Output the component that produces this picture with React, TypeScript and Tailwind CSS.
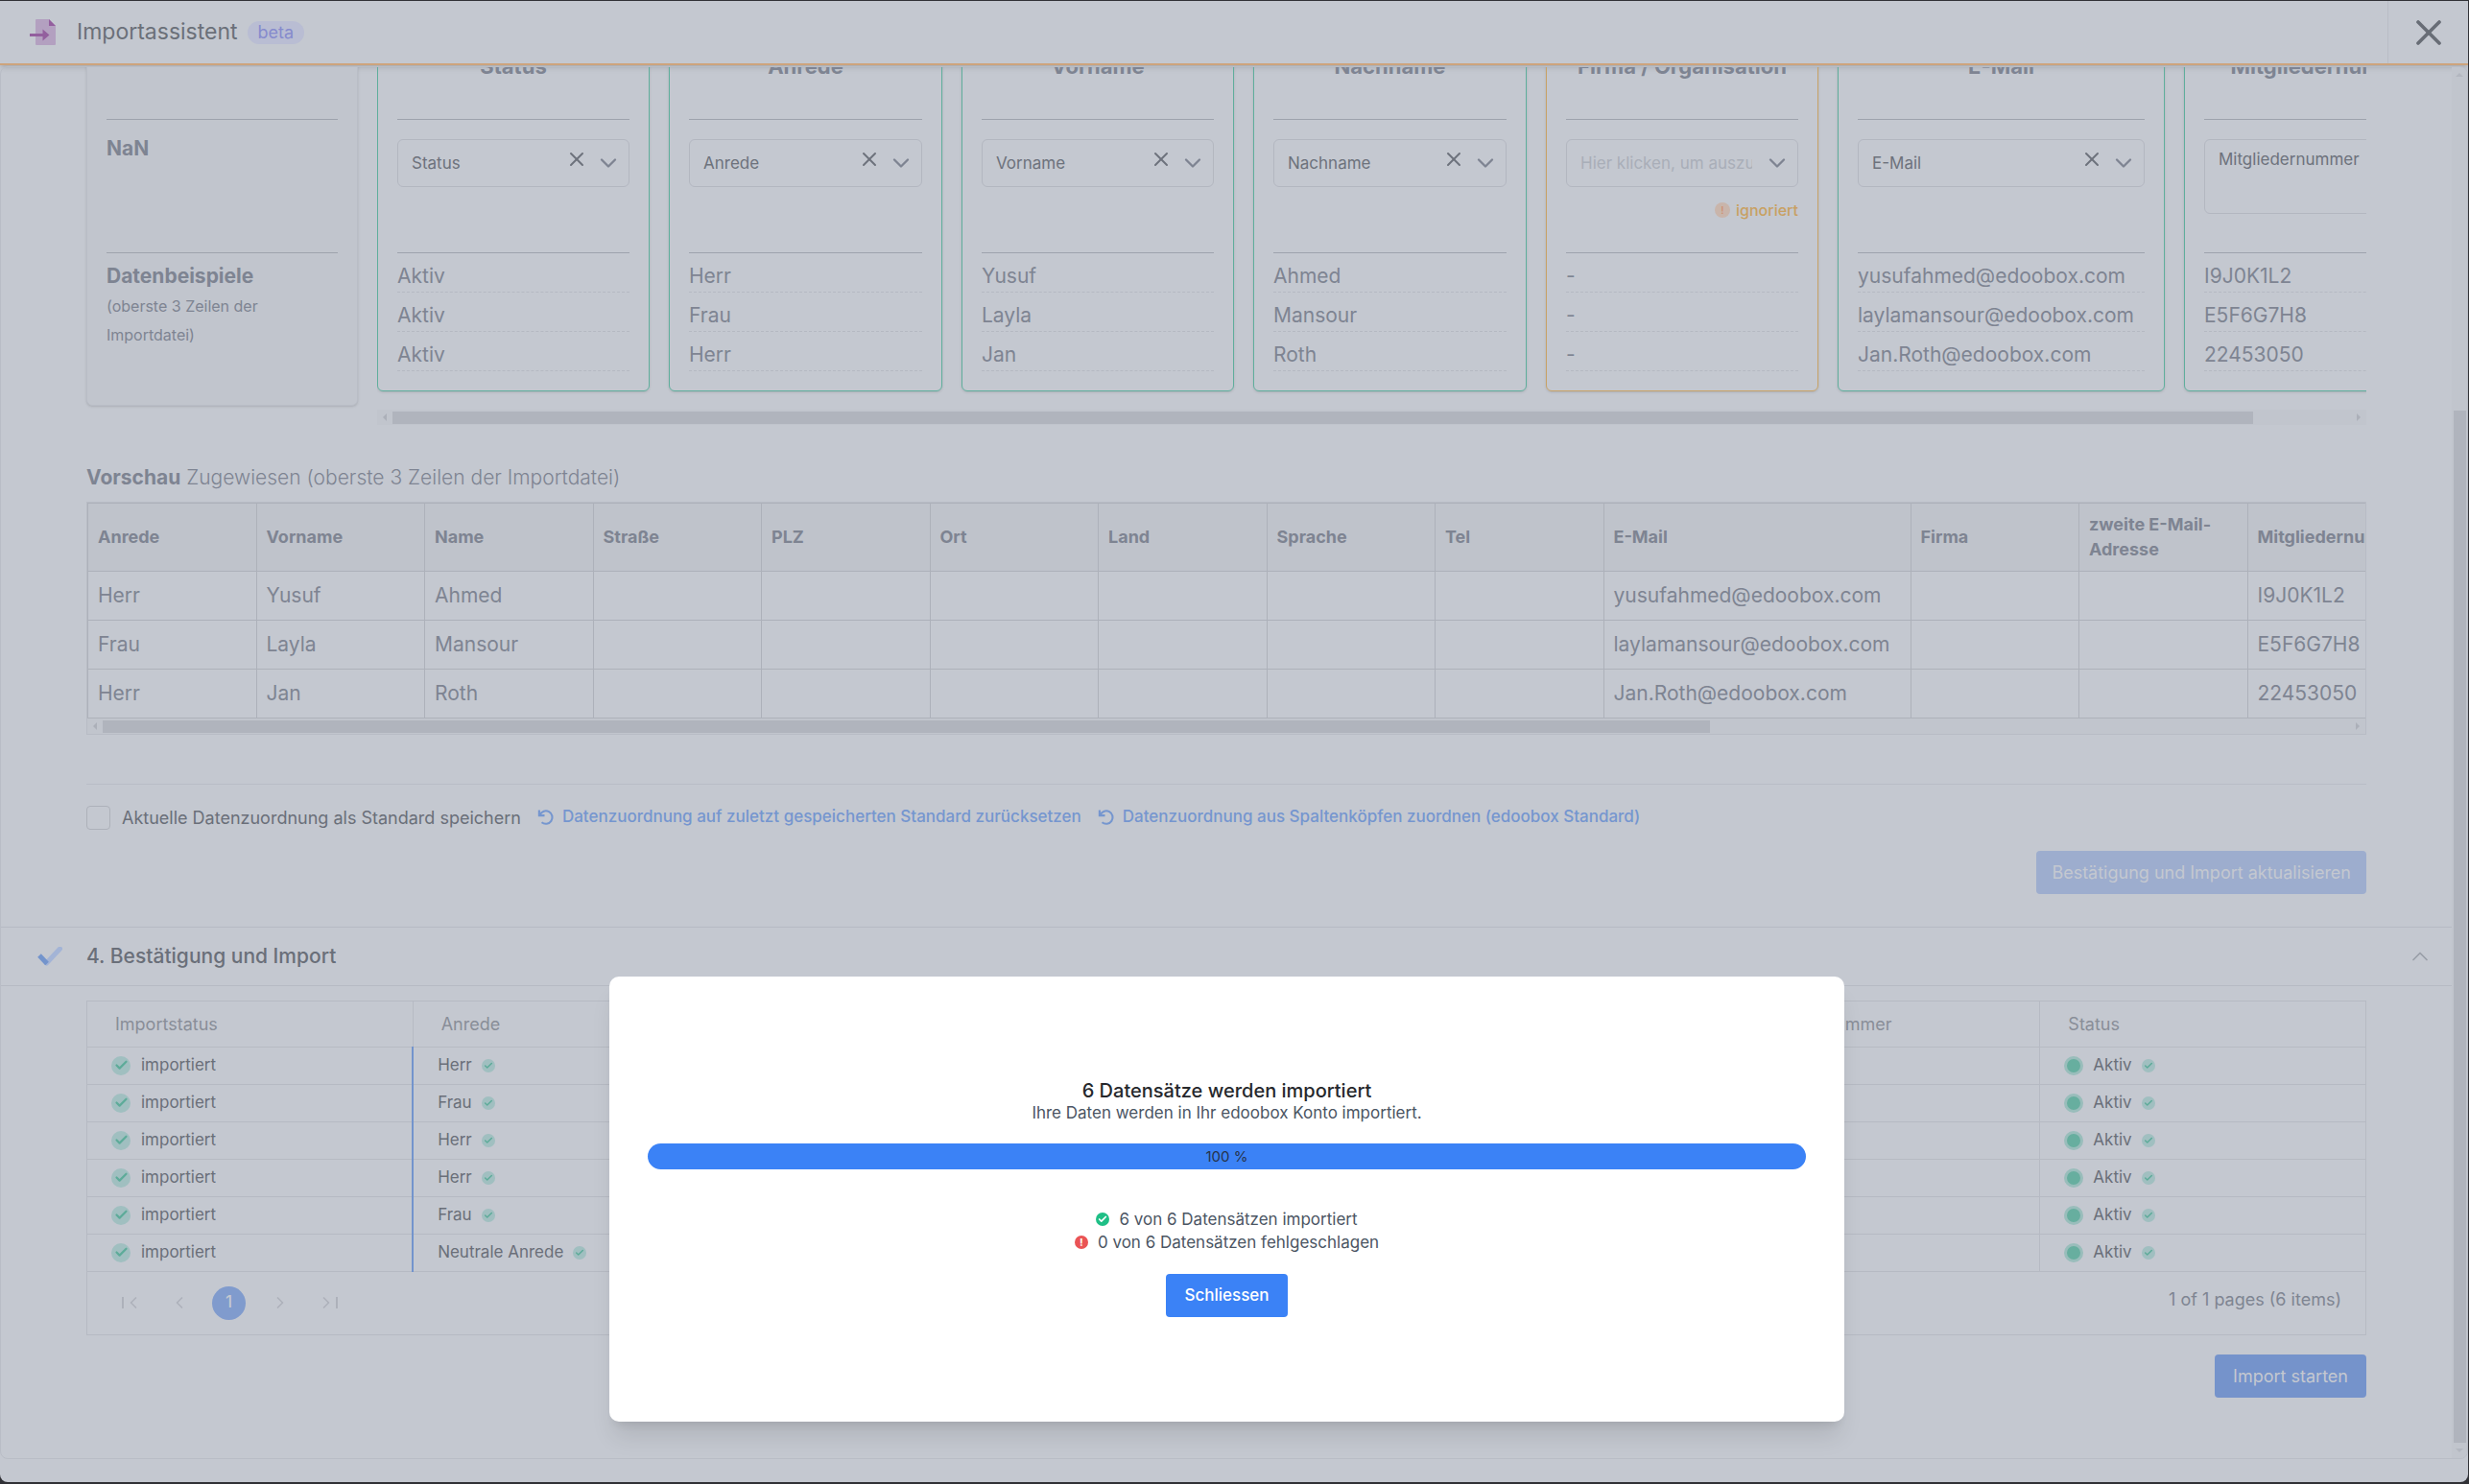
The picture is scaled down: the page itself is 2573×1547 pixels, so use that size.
import { useState } from "react";
import { Check, ChevronDown, ChevronLeft, ChevronRight, ChevronUp, X } from "lucide-react";

type Mapping = {
  title: string;
  value: string | null;
  samples: string[];
  tall?: boolean;
};

const mappings: Mapping[] = [
  { title: "Status", value: "Status", samples: ["Aktiv", "Aktiv", "Aktiv"] },
  { title: "Anrede", value: "Anrede", samples: ["Herr", "Frau", "Herr"] },
  { title: "Vorname", value: "Vorname", samples: ["Yusuf", "Layla", "Jan"] },
  { title: "Nachname", value: "Nachname", samples: ["Ahmed", "Mansour", "Roth"] },
  { title: "Firma / Organisation", value: null, samples: ["-", "-", "-"] },
  {
    title: "E-Mail",
    value: "E-Mail",
    samples: ["yusufahmed@edoobox.com", "laylamansour@edoobox.com", "Jan.Roth@edoobox.com"],
  },
  {
    title: "Mitgliedernummer",
    value: "Mitgliedernummer",
    samples: ["I9J0K1L2", "E5F6G7H8", "22453050"],
    tall: true,
  },
];

const previewColumns = [
  "Anrede",
  "Vorname",
  "Name",
  "Straße",
  "PLZ",
  "Ort",
  "Land",
  "Sprache",
  "Tel",
  "E-Mail",
  "Firma",
  "zweite E-Mail-Adresse",
  "Mitgliedernummer",
];

const previewRows = [
  ["Herr", "Yusuf", "Ahmed", "", "", "", "", "", "", "yusufahmed@edoobox.com", "", "", "I9J0K1L2"],
  ["Frau", "Layla", "Mansour", "", "", "", "", "", "", "laylamansour@edoobox.com", "", "", "E5F6G7H8"],
  ["Herr", "Jan", "Roth", "", "", "", "", "", "", "Jan.Roth@edoobox.com", "", "", "22453050"],
];

const resultColumns = ["Importstatus", "Anrede", "Vorname", "Nachname", "E-Mail", "Mitgliedernummer", "Status"];
const resultSalutations = ["Herr", "Frau", "Herr", "Herr", "Frau", "Neutrale Anrede"];

function ImportIcon() {
  return (
    <svg viewBox="0 0 28 28" className="h-7 w-7" aria-hidden="true">
      <path d="M6 1a1 1 0 0 1 1-1h13l7 7v19a1 1 0 0 1-1 1H7a1 1 0 0 1-1-1z" fill="#b3a0c0" />
      <path d="M20 0l7 7h-7z" fill="#935f9e" />
      <path d="M0 15h13.500v-4.500l7 6-7 6V18H0z" fill="#935f9e" />
    </svg>
  );
}

function ResetIcon() {
  return (
    <svg
      viewBox="0 0 24 24"
      className="h-[18px] w-[18px] shrink-0"
      fill="none"
      stroke="currentColor"
      strokeWidth="2.800"
      aria-hidden="true"
    >
      <path d="M2.500 2v7.500h7.500" />
      <path d="M3.500 8.500A9 9 0 1 1 6 19" />
    </svg>
  );
}

function DoneIcon() {
  return (
    <svg viewBox="0 0 26 20" className="h-5 w-[26px]" fill="none" strokeWidth="5" aria-hidden="true">
      <path d="M9.500 17L23.500 2" stroke="#a3b4d6" strokeLinecap="round" />
      <path d="M2 9l8 8.500" stroke="#7394cc" />
    </svg>
  );
}

function SmallCheck() {
  return (
    <span className="flex h-3.5 w-3.5 items-center justify-center rounded-full bg-[#a0bfc0] text-[#5dab99]">
      <Check size={10} strokeWidth={3.5} />
    </span>
  );
}

function HorizontalScrollbar({ thumb }: { thumb: string }) {
  return (
    <div className="flex h-4 items-center bg-[#c1c5cd] text-[#acb0b9]">
      <svg viewBox="0 0 4 8" className="mx-1.5 h-2 w-1" fill="currentColor">
        <path d="M4 0v8L0 4z" />
      </svg>
      <div className="flex-1">
        <div className={`h-[13px] bg-[#b0b4bd] ${thumb}`} />
      </div>
      <svg viewBox="0 0 4 8" className="mx-1.5 h-2 w-1" fill="currentColor">
        <path d="M0 0v8l4-4z" />
      </svg>
    </div>
  );
}

function MappingCard({ title, value, samples, tall }: Mapping) {
  const [selected, setSelected] = useState(value ?? "");

  return (
    <div
      className={`rounded-md border px-5 pb-5 shadow-sm ${value ? "border-[#5fae9c]" : "border-[#c8a266]"}`}
    >
      <div className="h-20 border-b border-[#9ea3ad] pt-2.5 text-center">
        <h3 className="text-[22px] leading-7 font-bold whitespace-nowrap">{title}</h3>
      </div>
      <div className="h-[139px] border-b border-[#9ea3ad] pt-5">
        <div
          className={`flex rounded-md border border-[#b3b7c0] pr-[7px] pl-3.5 ${
            tall ? "h-[78px] items-start pt-2" : "h-[50px] items-center"
          }`}
        >
          <select
            aria-label={title}
            value={selected}
            onChange={(e) => setSelected(e.target.value)}
            className={`min-w-0 flex-1 appearance-none bg-transparent text-[17px] leading-6 outline-none ${
              selected ? "text-[#6d727c]" : "mr-3 text-[#a9aeb8]"
            }`}
          >
            <option value="">Hier klicken, um auszuwählen</option>
            <option value={title}>{title}</option>
          </select>
          {selected && (
            <button
              type="button"
              aria-label="Auswahl entfernen"
              onClick={() => setSelected("")}
              className="mr-[7px] mb-2 text-[#6d727c]"
            >
              <X size={24} strokeWidth={2} />
            </button>
          )}
          <ChevronDown size={28} strokeWidth={2} className="shrink-0" />
        </div>
        {!value && (
          <p className="mt-3 flex items-center justify-end gap-1.5 text-[16px] leading-6 font-medium text-[#c8a062]">
            <span className="flex h-4 w-4 items-center justify-center rounded-full bg-[#c9b5ab] text-[11px] text-[#cf9070]">
              !
            </span>
            ignoriert
          </p>
        )}
      </div>
      <ul>
        {samples.map((sample, i) => (
          <li key={i} className="h-[41px] border-b border-dashed border-[#b5b9c2] pt-2 text-[21px] leading-8">
            {sample}
          </li>
        ))}
      </ul>
    </div>
  );
}

function MappingSection() {
  return (
    <div className="-mt-[26px] flex items-start gap-5">
      <div className="w-[283px] shrink-0 rounded-md border border-[#b9bdc6] bg-[#c1c5cd] px-5 pb-[58px] shadow-sm">
        <div className="h-20 border-b border-[#9ea3ad]">
          <h3 className="text-[21px] leading-7 font-bold">Spaltenkopf</h3>
        </div>
        <div className="h-[139px] border-b border-[#9ea3ad] pt-4">
          <h3 className="text-[21px] leading-7 font-bold">NaN</h3>
        </div>
        <h3 className="pt-2 text-[21px] leading-8 font-bold">Datenbeispiele</h3>
        <p className="w-48 text-[16px] leading-[30px]">(oberste 3 Zeilen der Importdatei)</p>
      </div>
      <div className="min-w-0 flex-1 overflow-hidden">
        <div className="mb-[19px] grid grid-cols-[284px_285px_284px_285px_284px_341px_296px] gap-5">
          {mappings.map((m) => (
            <MappingCard key={m.title} {...m} />
          ))}
        </div>
        <HorizontalScrollbar thumb="w-[95%]" />
      </div>
    </div>
  );
}

function PreviewSection() {
  return (
    <div className="mt-[39px]">
      <h2 className="text-[21px] leading-8 font-light">
        <strong className="font-bold">Vorschau</strong> Zugewiesen (oberste 3 Zeilen der Importdatei)
      </h2>
      <div className="mt-[9px] overflow-hidden border border-[#b8bcc5]">
        <table className="w-[2427px] table-fixed border-collapse text-left">
          <thead>
            <tr className="h-[71px] bg-[#bfc3cb]">
              {previewColumns.map((col) => (
                <th
                  key={col}
                  className={`border border-[#adb1ba] px-2.5 text-[18px] leading-[26px] font-bold ${
                    col === "E-Mail" ? "w-[320px]" : ""
                  }`}
                >
                  {col}
                </th>
              ))}
            </tr>
          </thead>
          <tbody>
            {previewRows.map((row) => (
              <tr key={row[1]} className="h-[51px]">
                {row.map((cell, i) => (
                  <td key={i} className="border border-[#adb1ba] px-2.5 text-[21px] leading-7">
                    {cell}
                  </td>
                ))}
              </tr>
            ))}
          </tbody>
        </table>
        <HorizontalScrollbar thumb="w-[71.5%]" />
      </div>
    </div>
  );
}

function MappingActions() {
  const [saveDefault, setSaveDefault] = useState(false);

  return (
    <div className="mt-[51px] border-t border-[#b9bdc6] pt-[22px] pb-[34px]">
      <div className="flex h-6 items-center gap-[17px] text-[17px]">
        <label className="flex items-center gap-3 text-[18px] text-[#6a6f79]">
          <input
            type="checkbox"
            checked={saveDefault}
            onChange={(e) => setSaveDefault(e.target.checked)}
            className="h-[25px] w-[25px] appearance-none rounded-sm border border-[#adb1ba] checked:bg-[#7593cb]"
          />
          Aktuelle Datenzuordnung als Standard speichern
        </label>
        <a href="#reset" className="flex items-center gap-2 font-medium text-[#7596cf]">
          <ResetIcon />
          Datenzuordnung auf zuletzt gespeicherten Standard zurücksetzen
        </a>
        <a href="#columns" className="flex items-center gap-2 font-medium text-[#7596cf]">
          <ResetIcon />
          Datenzuordnung aus Spaltenköpfen zuordnen (edoobox Standard)
        </a>
      </div>
      <div className="mt-[23px] flex justify-end">
        <button type="button" disabled className="h-[45px] rounded bg-[#9dadce] px-4 text-[18px] text-[#c4c8d0]">
          Bestätigung und Import aktualisieren
        </button>
      </div>
    </div>
  );
}

function Pager() {
  return (
    <div className="flex h-[65px] items-center justify-between pr-[25px] pl-9 text-[#adb1ba]">
      <nav aria-label="Seiten" className="flex items-center">
        <button type="button" aria-label="Erste Seite" className="flex w-7 items-center">
          <span className="h-3 w-0.5 bg-current" />
          <ChevronLeft size={20} />
        </button>
        <button type="button" aria-label="Vorherige Seite" className="ml-[22px]">
          <ChevronLeft size={20} />
        </button>
        <button
          type="button"
          className="ml-6 h-[35px] w-[35px] rounded-full bg-[#809bcd] text-[17px] font-medium text-[#c4c8d0]"
        >
          1
        </button>
        <button type="button" aria-label="Nächste Seite" className="ml-[26px]">
          <ChevronRight size={20} />
        </button>
        <button type="button" aria-label="Letzte Seite" className="ml-7 flex items-center">
          <ChevronRight size={20} />
          <span className="h-3 w-0.5 bg-current" />
        </button>
      </nav>
      <span className="pb-2 text-[18px] text-[#7f8592]">1 of 1 pages (6 items)</span>
    </div>
  );
}

function ResultTable() {
  return (
    <div className="border border-[#b6bac3] text-[17px]">
      <table className="w-full table-fixed border-collapse text-left">
        <thead>
          <tr className="h-[47px] border-b border-[#b6bac3] text-[18px]">
            {resultColumns.map((col) => (
              <th key={col} className="border-l border-[#b6bac3] px-[29px] font-normal text-[#898e98] first:border-l-0">
                {col}
              </th>
            ))}
          </tr>
        </thead>
        <tbody className="text-[#6a6f79]">
          {resultSalutations.map((salutation, i) => (
            <tr key={i} className="h-[39px] border-b border-[#b6bac3]">
              <td className="border-r-2 border-r-[#7394cc] pl-[25px]">
                <span className="flex items-center gap-[11px]">
                  <span className="flex h-5 w-5 items-center justify-center rounded-full bg-[#a0bfc0] text-[#5dab99]">
                    <Check size={15} strokeWidth={3.5} />
                  </span>
                  importiert
                </span>
              </td>
              <td className="pl-[25px]">
                <span className="flex items-center gap-2.5">
                  {salutation}
                  <SmallCheck />
                </span>
              </td>
              <td className="border-l border-[#b6bac3]" />
              <td className="border-l border-[#b6bac3]" />
              <td className="border-l border-[#b6bac3]" />
              <td className="border-l border-[#b6bac3]" />
              <td className="border-l border-[#b6bac3] pl-[25px]">
                <span className="flex items-center gap-2.5">
                  <span className="h-5 w-5 rounded-full border-[3px] border-[#99bdbb] bg-[#67ae9f]" />
                  Aktiv
                  <SmallCheck />
                </span>
              </td>
            </tr>
          ))}
        </tbody>
      </table>
      <Pager />
    </div>
  );
}

function PageScrollbar() {
  return (
    <div className="flex w-4 shrink-0 flex-col items-center bg-[#c1c5cd] text-[#b3b7c0]">
      <svg viewBox="0 0 8 4" className="my-1.5 h-1 w-2" fill="currentColor">
        <path d="M0 4h8L4 0z" />
      </svg>
      <div className="grow-[342] basis-0" />
      <div className="w-[13px] grow-[1076] basis-0 bg-[#b0b4bd]" />
      <svg viewBox="0 0 8 4" className="my-1.5 h-1 w-2" fill="currentColor">
        <path d="M0 0h8L4 4z" />
      </svg>
    </div>
  );
}

function ProgressDialog() {
  return (
    <div className="absolute inset-0 flex items-end justify-center pr-4 pb-[65px]">
      <div
        role="dialog"
        aria-labelledby="dialog-title"
        className="flex h-[464px] w-[50vw] flex-col items-center justify-center rounded-[10px] bg-white px-10 pb-0.5 text-[17px] text-[#4b5563] shadow-xl"
      >
        <h2 id="dialog-title" className="text-[20px] leading-6 font-medium text-[#26282c]">
          6 Datensätze werden importiert
        </h2>
        <p className="leading-[22px]">Ihre Daten werden in Ihr edoobox Konto importiert.</p>
        <div
          role="progressbar"
          aria-valuenow={100}
          className="mt-[21px] h-[27px] w-full rounded-full bg-[#3b82f6] text-center text-[15px] leading-[27px] text-[#26324a]"
        >
          100 %
        </div>
        <p className="mt-10 flex items-center gap-2.5 leading-6">
          <span className="flex h-3.5 w-3.5 items-center justify-center rounded-full bg-[#1fbf86] text-white">
            <Check size={10} strokeWidth={4} />
          </span>
          6 von 6 Datensätzen importiert
        </p>
        <p className="flex items-center gap-2.5 leading-6">
          <span className="flex h-3.5 w-3.5 items-center justify-center rounded-full bg-[#ea5455] text-[11px] font-bold text-white">
            !
          </span>
          0 von 6 Datensätzen fehlgeschlagen
        </p>
        <button type="button" className="mt-[21px] h-[45px] rounded bg-[#3b82f6] px-[19px] font-medium text-white">
          Schliessen
        </button>
      </div>
    </div>
  );
}

export default function App() {
  return (
    <div className="relative h-screen overflow-hidden bg-[#303136] pt-px pr-px pb-0.5 font-['Inter',sans-serif] text-[#7e8492]">
      <div className="flex h-full flex-col overflow-hidden rounded-b-lg bg-[#c4c8d0]">
        <header className="flex h-[67px] shrink-0 items-center border-b-2 border-[#cda47c] pl-[31px] shadow-md">
          <ImportIcon />
          <h1 className="ml-[21px] text-[23px] text-[#6b7079]">Importassistent</h1>
          <span className="ml-2.5 flex h-6 items-center rounded-full bg-[#b9bdd3] px-[11px] text-[18px] text-[#868bcd]">
            beta
          </span>
          <button
            type="button"
            aria-label="Schliessen"
            className="ml-auto flex h-full w-[84px] items-center justify-center border-l border-[#b9bdc6] text-[#686d76]"
          >
            <X size={44} strokeWidth={2} />
          </button>
        </header>

        <main className="mt-px mb-6 flex min-h-0 flex-1 overflow-hidden rounded-lg border border-[#b9bdc6]">
          <div className="min-w-0 flex-1">
            <section className="px-[89px]">
              <MappingSection />
              <PreviewSection />
              <MappingActions />
            </section>
            <section>
              <div className="flex h-[62px] items-center border-y border-[#b6bac3] pr-[19px] pl-[38px]">
                <DoneIcon />
                <h2 className="ml-[25px] flex-1 text-[21px] font-medium text-[#6a6f79]">4. Bestätigung und Import</h2>
                <button type="button" aria-label="Abschnitt einklappen" className="text-[#999ea8]">
                  <ChevronUp size={28} strokeWidth={1.5} />
                </button>
              </div>
              <div className="px-[89px] pt-[15px]">
                <ResultTable />
                <div className="mt-5 flex justify-end">
                  <button type="button" className="h-[45px] rounded bg-[#7593cb] px-[19px] text-[18px] text-[#c4c8d0]">
                    Import starten
                  </button>
                </div>
              </div>
            </section>
          </div>
          <PageScrollbar />
        </main>
      </div>
      <ProgressDialog />
    </div>
  );
}
